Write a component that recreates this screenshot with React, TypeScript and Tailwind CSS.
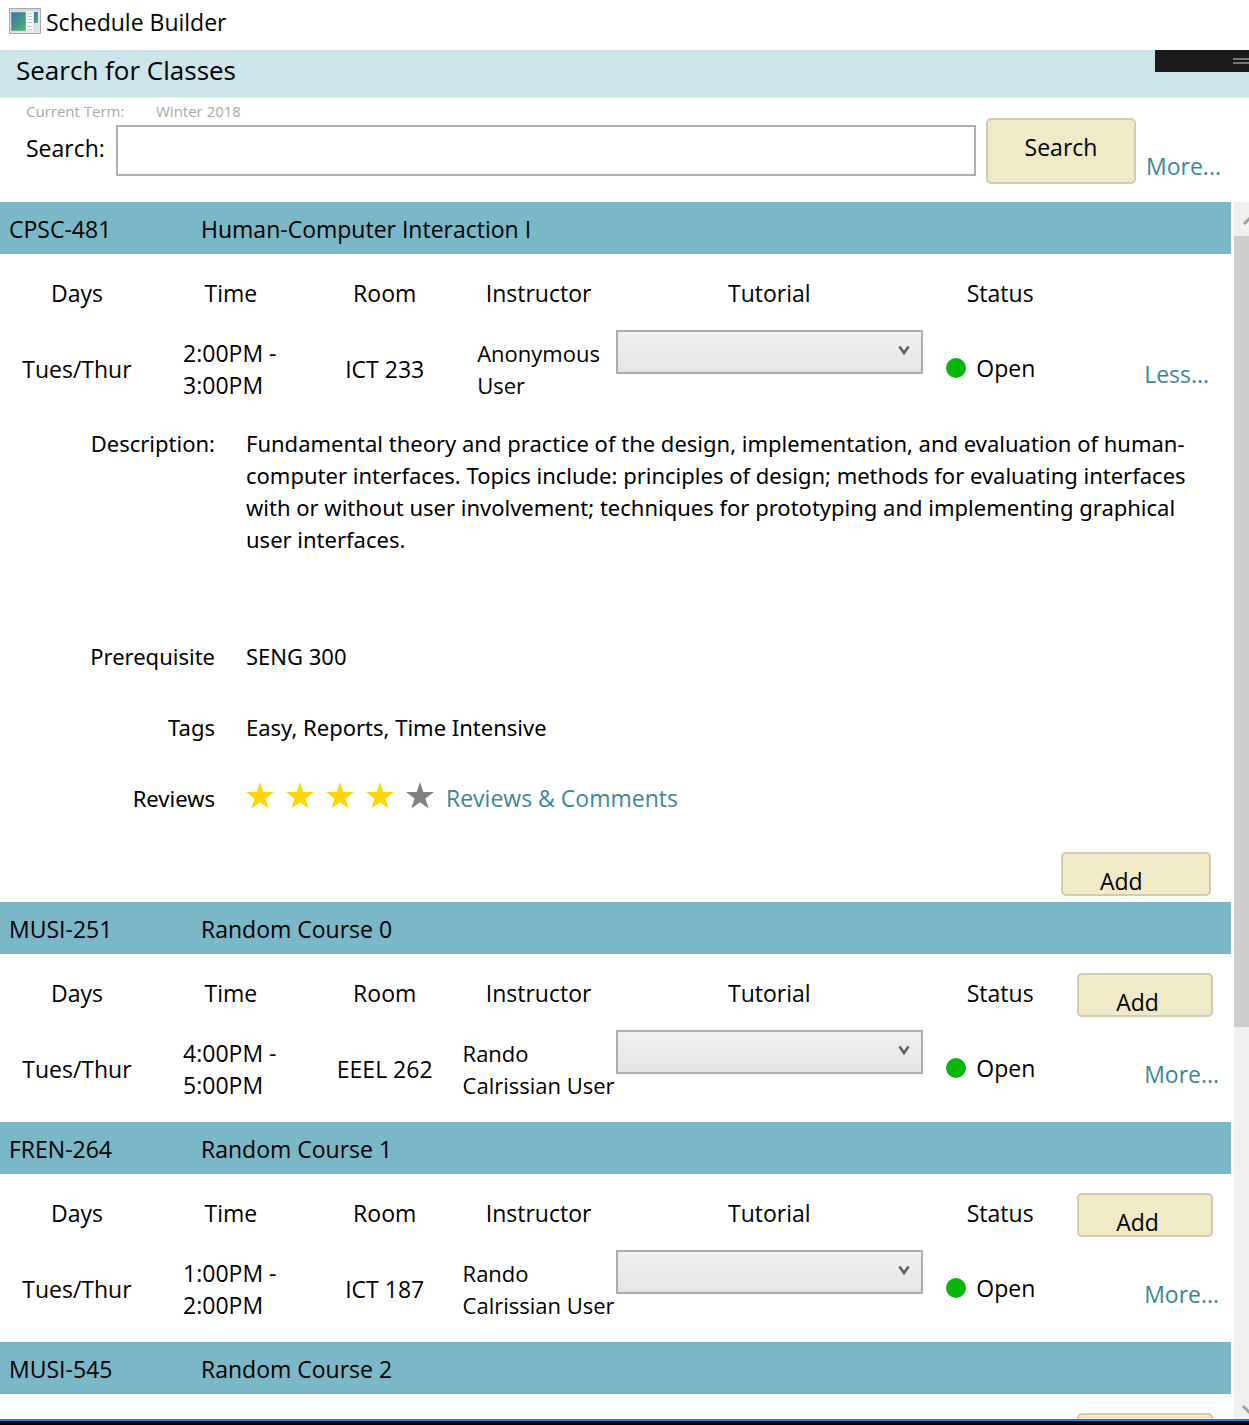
import React from "react";

type Course = {
  code: string;
  title: string;
  days: string;
  time: string[];
  room: string;
  instructor: string[];
  expanded?: boolean;
};

const courses: Course[] = [
  { code: "CPSC-481", title: "Human-Computer Interaction I", days: "Tues/Thur", time: ["2:00PM -", "3:00PM"], room: "ICT 233", instructor: ["Anonymous", "User"], expanded: true },
  { code: "MUSI-251", title: "Random Course 0", days: "Tues/Thur", time: ["4:00PM -", "5:00PM"], room: "EEEL 262", instructor: ["Rando", "Calrissian User"] },
  { code: "FREN-264", title: "Random Course 1", days: "Tues/Thur", time: ["1:00PM -", "2:00PM"], room: "ICT 187", instructor: ["Rando", "Calrissian User"] },
  { code: "MUSI-545", title: "Random Course 2", days: "", time: [], room: "", instructor: [] },
];

function Lines({ lines }: { lines: string[] }) {
  return (
    <span className="inline-block text-left whitespace-nowrap align-middle">
      {lines.map((line) => (
        <span key={line} className="block">{line}</span>
      ))}
    </span>
  );
}

function AddButton({ wide }: { wide?: boolean }) {
  return (
    <button
      type="button"
      className={
        (wide ? "w-[150px]" : "w-[136px]") +
        " block h-11 rounded-[5px] border-2 border-[#d3cba9] bg-[#f0eac8] pt-[14px] pl-[37px] text-left leading-6"
      }
    >
      Add
    </button>
  );
}

function Star({ filled }: { filled: boolean }) {
  return (
    <svg viewBox="0 0 28 27" className={filled ? "h-[27px] w-7 text-[#ffd700]" : "h-[27px] w-7 text-[#808080]"} aria-hidden="true">
      <path fill="currentColor" d="M14 0 L17.3 10 H28 L19.4 16.4 L22.7 26.6 L14 20.3 L5.3 26.6 L8.6 16.4 L0 10 H10.7 Z" />
    </svg>
  );
}

function Details() {
  return (
    <div className="pt-[5px] pb-[6px]">
      <dl className="grid grid-cols-[215px_1fr] gap-x-[31px] gap-y-[39px] pr-5 font-['Noto_Sans','Open_Sans',sans-serif] text-[22px]">
        <dt className="text-right">Description:</dt>
        <dd className="min-h-[174px]">
          Fundamental theory and practice of the design, implementation, and evaluation of human-computer interfaces. Topics include: principles of design; methods for evaluating interfaces with or without user involvement; techniques for prototyping and implementing graphical user interfaces.
        </dd>
        <dt className="text-right">Prerequisite</dt>
        <dd>SENG 300</dd>
        <dt className="text-right">Tags</dt>
        <dd>Easy, Reports, Time Intensive</dd>
        <dt className="text-right">Reviews</dt>
        <dd className="flex gap-3">
          <span className="flex gap-3" role="img" aria-label="4 out of 5 stars">
            {[1, 2, 3, 4, 5].map((n) => (
              <Star key={n} filled={n < 5} />
            ))}
          </span>
          <a href="#reviews" className="font-['Open_Sans','Noto_Sans',sans-serif] text-[23px] text-[#3c8797]">Reviews &amp; Comments</a>
        </dd>
      </dl>
      <div className="mt-[38px] flex justify-end pr-5">
        <AddButton wide />
      </div>
    </div>
  );
}

function CourseSection({ course }: { course: Course }) {
  return (
    <section>
      <h2 className="flex h-13 items-center bg-[#7ab7c7] pt-0.5 pl-[9px]">
        <span className="w-48">{course.code}</span>
        <span>{course.title}</span>
      </h2>
      {course.days ? (
        <table className="w-full table-fixed border-collapse">
          <colgroup>
            <col span={4} />
            <col className="w-1/4" />
            <col span={2} />
          </colgroup>
          <thead>
            <tr className="h-19">
              {["Days", "Time", "Room", "Instructor", "Tutorial", "Status"].map((h) => (
                <th key={h} className="p-0 pt-0.5 text-center font-normal">{h}</th>
              ))}
              <td className="p-0 pt-[19px] align-top">{!course.expanded && <AddButton />}</td>
            </tr>
          </thead>
          <tbody>
            <tr className="h-23">
              <td className="p-0 pb-[14px] text-center">{course.days}</td>
              <td className="p-0 pr-0.5 pb-[14px] text-center"><Lines lines={course.time} /></td>
              <td className="p-0 pb-[14px] text-center">{course.room}</td>
              <td className="p-0 pb-[14px] text-center text-[22px]"><Lines lines={course.instructor} /></td>
              <td className="p-0 align-top">
                <div className="relative">
                  <select
                    aria-label={"Tutorial for " + course.code}
                    className="block h-11 w-full appearance-none border-2 border-[#acacac] bg-linear-to-b from-[#f0f0f0] to-[#e5e5e5] px-3"
                  />
                  <svg viewBox="0 0 12 11" className="pointer-events-none absolute top-[15px] right-[13px] h-[11px] w-3" aria-hidden="true">
                    <path d="M1.5 1.5 L6 8 L10.5 1.5" fill="none" stroke="#606060" strokeWidth="2.6" />
                  </svg>
                </div>
              </td>
              <td className="p-0 pb-4">
                <span className="flex items-center gap-[10px] pl-[23px]">
                  <span className="size-5 rounded-full bg-[#06b60a]" />
                  Open
                </span>
              </td>
              <td className="p-0 pb-1 pl-[67px]">
                <a href={"#" + course.code} className="text-[#3c8797]">{course.expanded ? "Less..." : "More..."}</a>
              </td>
            </tr>
          </tbody>
        </table>
      ) : (
        <div className="flex justify-end pt-[19px] pr-[18px]">
          <button
            type="button"
            aria-label={"Add " + course.code}
            className="h-11 w-[136px] rounded-[5px] border-2 border-[#d3cba9] bg-[#f0eac8]"
          />
        </div>
      )}
      {course.expanded && <Details />}
    </section>
  );
}

function WindowIcon() {
  return (
    <svg viewBox="0 0 32 26" className="h-[26px] w-8" aria-hidden="true">
      <defs>
        <linearGradient id="pane" x1="0" y1="0" x2="1" y2="1">
          <stop offset="0" stopColor="#3a72ae" />
          <stop offset="0.5" stopColor="#409291" />
          <stop offset="1" stopColor="#62b56c" />
        </linearGradient>
      </defs>
      <rect x="0.5" y="0.5" width="31" height="25" fill="#e4e6e9" stroke="#a5a8ae" />
      <rect x="1" y="1" width="30" height="2" fill="#d5d8dd" />
      <rect x="2" y="4" width="15" height="19" fill="url(#pane)" stroke="#cfdada" strokeWidth="0.5" />
      <rect x="17" y="4" width="7" height="19" fill="#fafafa" />
      <path d="M18 5.5h5M18 8.5h5M18 11.5h5M18 14.5h5M18 18.5h5M18 21.5h5" stroke="#c6c9cd" />
      <rect x="25" y="4" width="4" height="11" fill="url(#pane)" />
      <rect x="25" y="16" width="5" height="7" fill="#dfe1e4" />
    </svg>
  );
}

export default function App() {
  return (
    <div className="flex h-screen flex-col overflow-hidden bg-white font-['Open_Sans','Noto_Sans',sans-serif] text-[23px] leading-8 text-black">
      <header className="flex h-[50px] shrink-0 items-center gap-[5px] pb-2 pl-[9px]">
        <WindowIcon />
        <span className="pt-0.5">Schedule Builder</span>
      </header>
      <div className="relative h-12 shrink-0 border-b border-[#e4f1f4] bg-[#cbe5eb] pt-1 pl-4">
        <h1 className="text-[26px]">Search for Classes</h1>
        <div className="absolute top-0 right-0 flex h-[22px] w-[94px] flex-col items-end gap-0.5 bg-[#1b1b1b] pt-2">
          <span className="h-0.5 w-4 bg-[#777]" />
          <span className="h-0.5 w-4 bg-[#777]" />
        </div>
      </div>
      <form className="flex h-[104px] shrink-0 pr-[30px] pl-[26px]" onSubmit={(e) => e.preventDefault()}>
        <div className="flex-1">
          <p className="flex h-[27px] items-center pb-0.5 text-[15px] text-[#a9a9a9]">
            <span className="w-[130px]">Current Term:</span>
            <span>Winter 2018</span>
          </p>
          <div className="flex">
            <label htmlFor="search" className="w-[90px] pt-[7px]">Search:</label>
            <input id="search" type="text" className="h-[51px] min-w-0 flex-1 border-2 border-[#abadb3] px-2 outline-none" />
          </div>
        </div>
        <button type="submit" className="mt-5 ml-[10px] h-[66px] w-[150px] rounded-[5px] border-2 border-[#d3cba9] bg-[#f0eac8] pb-2">
          Search
        </button>
        <a href="#more" className="mt-[52px] ml-[10px] w-[73px] text-[#3c8797]">More...</a>
      </form>
      <main className="flex min-h-0 flex-1 gap-[3px]">
        <div className="min-w-0 flex-1 overflow-y-auto [scrollbar-width:none]">
          {courses.map((c) => (
            <CourseSection key={c.code} course={c} />
          ))}
        </div>
        <div className="flex w-[15px] flex-col overflow-hidden bg-[#f0f0f0]" aria-hidden="true">
          <svg viewBox="0 0 34 34" className="h-[34px] w-[34px] shrink-0">
            <path d="M10 22 L17 15 L24 22" fill="none" stroke="#a0a0a0" strokeWidth="3" />
          </svg>
          <div className="h-[65%] w-full bg-[#cdcdcd]" />
          <svg viewBox="0 0 34 34" className="mt-auto h-[34px] w-[34px] shrink-0">
            <path d="M9 21 L17 29 L25 21" fill="none" stroke="#a0a0a0" strokeWidth="3" />
          </svg>
        </div>
      </main>
      <footer className="h-[6px] shrink-0 border-t-2 border-[#1883d7] bg-black" />
    </div>
  );
}
